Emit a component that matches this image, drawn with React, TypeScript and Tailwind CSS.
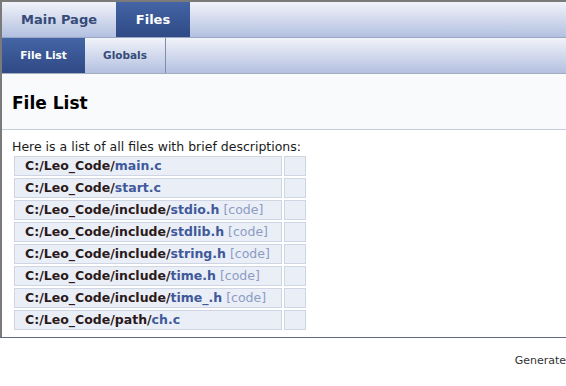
import React from 'react';

interface FileRow {
  dir: string;
  name: string;
  code?: boolean;
}

const files: FileRow[] = [
  { dir: 'C:/Leo_Code/', name: 'main.c' },
  { dir: 'C:/Leo_Code/', name: 'start.c' },
  { dir: 'C:/Leo_Code/include/', name: 'stdio.h', code: true },
  { dir: 'C:/Leo_Code/include/', name: 'stdlib.h', code: true },
  { dir: 'C:/Leo_Code/include/', name: 'string.h', code: true },
  { dir: 'C:/Leo_Code/include/', name: 'time.h', code: true },
  { dir: 'C:/Leo_Code/include/', name: 'time_.h', code: true },
  { dir: 'C:/Leo_Code/path/', name: 'ch.c' },
];

const barBg = 'bg-gradient-to-b from-[#f1f3f9] to-[#b3c0e0]';
const activeBg = 'bg-gradient-to-b from-[#4464a5] to-[#2f4a85]';

const App: React.FC = () => {
  return (
    <div className="w-[566px] h-[386px] overflow-hidden bg-white text-black" style={{ fontFamily: 'Tahoma, "DejaVu Sans", Verdana, sans-serif' }}>
      <div className="border-t-2 border-l-2 border-[#7a7a7a]">
        {/* main tabs */}
        <div className={`flex h-[36px] ${barBg} border-b border-[#9aa6c6]`}>
          <div className="w-[114px] flex items-center justify-center text-[13px] font-bold text-[#354b78]">Main Page</div>
          <div className={`w-[74px] flex items-center justify-center text-[13px] font-bold text-white ${activeBg}`}>Files</div>
        </div>
        {/* sub tabs */}
        <div className={`flex h-[36px] ${barBg} border-b border-[#a4acc0]`}>
          <div className={`w-[83px] flex items-center justify-center text-[10.5px] font-bold text-white ${activeBg}`}>File List</div>
          <div className="w-[81px] flex items-center justify-center text-[10.5px] font-bold text-[#354b78] border-r border-[#7f8cb0]">Globals</div>
        </div>
        {/* header */}
        <div className="h-[56px] bg-[#f9fafc] border-b border-[#c4cbd9] flex items-center pl-[10px] pt-[3px]">
          <h1 className="text-[17px] font-bold leading-none">File List</h1>
        </div>
        {/* content */}
        <div className="pl-[10px] pt-[10px] pb-[7px]">
          <div className="text-[12.5px] leading-[14px] text-[#1a1a1a]">Here is a list of all files with brief descriptions:</div>
          <div className="flex flex-col gap-[2px] mt-[2px] pl-[2px]">
            {files.map((f, i) => (
              <div key={i} className="flex gap-[2px]">
                <div className="w-[268px] h-[20px] bg-[#eaeef7] border border-[#cfd5e2] flex items-center pl-[10px] text-[12.5px] whitespace-nowrap">
                  <span className="font-bold text-[#2a1a1a]">{f.dir}</span>
                  <span className="font-bold text-[#40599a]">{f.name}</span>
                  {f.code && <span className="text-[#8b9cc4] ml-[4px]">[code]</span>}
                </div>
                <div className="w-[22px] h-[20px] bg-[#eaeef7] border border-[#cfd5e2]" />
              </div>
            ))}
          </div>
        </div>
      </div>
      <div className="border-t border-[#5f6b80]" />
      <div className="pt-[15px] text-right whitespace-nowrap text-[11px] text-[#333]">Generate</div>
    </div>
  );
};

export default App;
